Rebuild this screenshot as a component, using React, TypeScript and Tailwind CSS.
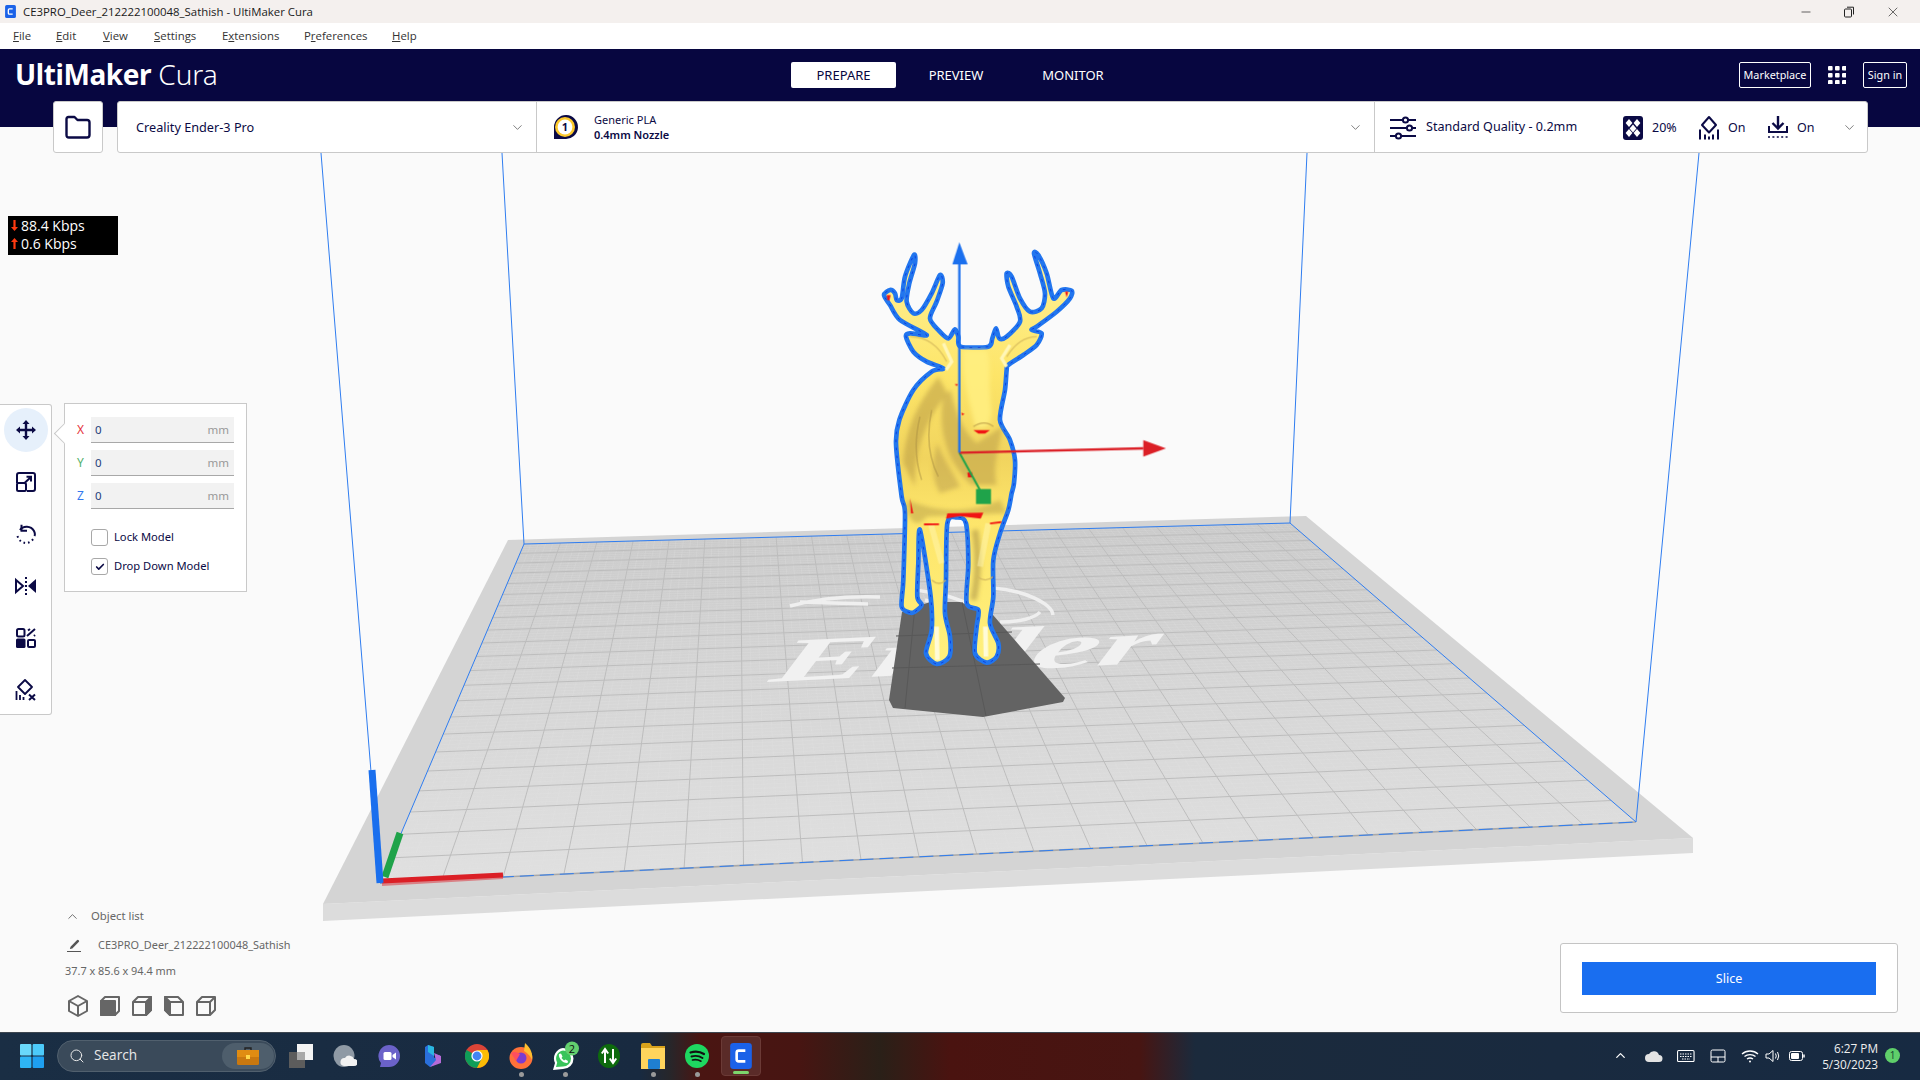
import { Search, ChevronDown, ChevronUp, Minus, X, Check, Pencil } from 'lucide-react';

const NAVY = '#0b0a45';

// projective mapping of the build plate, back-left, back-right, front-right, front-left
const quad = [
  [524, 544],
  [1290, 523],
  [1636, 822],
  [380, 883],
];

function makeProjector() {
  const [[x0, y0], [x1, y1], [x2, y2], [x3, y3]] = quad;
  const dx1 = x1 - x2;
  const dx2 = x3 - x2;
  const sx = x0 - x1 + x2 - x3;
  const dy1 = y1 - y2;
  const dy2 = y3 - y2;
  const sy = y0 - y1 + y2 - y3;
  const den = dx1 * dy2 - dx2 * dy1;
  const g = (sx * dy2 - dx2 * sy) / den;
  const h = (dx1 * sy - sx * dy1) / den;
  const a = x1 - x0 + g * x1;
  const b = x3 - x0 + h * x3;
  const d = y1 - y0 + g * y1;
  const e = y3 - y0 + h * y3;
  return (u: number, v: number) => {
    const w = g * u + h * v + 1;
    return [(a * u + b * v + x0) / w, (d * u + e * v + y0) / w];
  };
}

const project = makeProjector();

function gridLines(count: number) {
  const lines: string[] = [];
  for (let i = 1; i < count; i++) {
    const t = i / count;
    const [ax, ay] = project(t, 0);
    const [bx, by] = project(t, 1);
    const [cx, cy] = project(0, t);
    const [dx, dy] = project(1, t);
    lines.push(`M${ax.toFixed(1)} ${ay.toFixed(1)}L${bx.toFixed(1)} ${by.toFixed(1)}`);
    lines.push(`M${cx.toFixed(1)} ${cy.toFixed(1)}L${dx.toFixed(1)} ${dy.toFixed(1)}`);
  }
  return lines.join('');
}

const deerPoints =
  '150 1148 125 1130 130 1050 135 850 125 800 108 640 118 570 160 480 215 425 250 415 200 395 160 365 138 320 150 310 200 315 120 270 90 225 72 195 90 180 105 190 110 210 125 205 135 140 162 75 165 100 148 160 140 215 160 250 185 240 215 190 240 135 248 160 230 215 210 265 235 300 265 325 285 298 295 320 302 350 385 350 397 325 408 295 418 325 440 320 480 275 470 230 445 170 440 130 455 140 480 205 510 245 545 235 555 190 540 130 522 70 535 75 560 130 580 205 605 180 635 182 630 205 590 245 530 290 515 300 545 310 530 345 490 375 445 405 440 420 435 480 420 570 450 630 465 690 462 760 455 790 445 840 420 910 400 990 400 1100 390 1180 415 1240 410 1280 380 1298 345 1270 350 1190 355 1140 320 1120 325 1000 318 880 290 862 262 880 258 1050 255 1150 270 1220 268 1280 230 1302 198 1270 215 1200 212 1100 180 900 175 1000 172 1100 185 1125 165 1145';

// closed catmull-rom through the traced silhouette points
function smoothPath(raw: string) {
  const n = raw.split(' ').map(Number);
  const pts: number[][] = [];
  for (let i = 0; i < n.length; i += 2) pts.push([n[i], n[i + 1]]);
  const k = 7;
  let d = `M${pts[0][0]} ${pts[0][1]}`;
  for (let i = 0; i < pts.length; i++) {
    const p0 = pts[(i - 1 + pts.length) % pts.length];
    const p1 = pts[i];
    const p2 = pts[(i + 1) % pts.length];
    const p3 = pts[(i + 2) % pts.length];
    const c1x = p1[0] + (p2[0] - p0[0]) / k;
    const c1y = p1[1] + (p2[1] - p0[1]) / k;
    const c2x = p2[0] - (p3[0] - p1[0]) / k;
    const c2y = p2[1] - (p3[1] - p1[1]) / k;
    d += `C${c1x.toFixed(1)} ${c1y.toFixed(1)} ${c2x.toFixed(1)} ${c2y.toFixed(1)} ${p2[0]} ${p2[1]}`;
  }
  return d + 'Z';
}

const deerOutline = smoothPath(deerPoints);

function Deer() {
  return (
    <g transform="translate(860 230) scale(0.3333)">
      <defs>
        <linearGradient id="deerBody" x1="0" y1="0" x2="0" y2="1">
          <stop offset="0" stopColor="#fff19a" />
          <stop offset="0.3" stopColor="#fde568" />
          <stop offset="0.5" stopColor="#f1d45e" />
          <stop offset="0.64" stopColor="#fde56a" />
          <stop offset="1" stopColor="#fff07c" />
        </linearGradient>
        <filter id="soft" x="-20%" y="-20%" width="140%" height="140%">
          <feGaussianBlur stdDeviation="7" />
        </filter>
        <clipPath id="deerClip">
          <path d={deerOutline} />
        </clipPath>
      </defs>
      <path d={deerOutline} fill="url(#deerBody)" stroke="#2276ee" strokeWidth="14" strokeLinejoin="round" />
      <path d={deerOutline} fill="none" stroke="#0d3fe0" strokeWidth="3" strokeLinejoin="round" strokeDasharray="8 16" />
      <g clipPath="url(#deerClip)">
        <g filter="url(#soft)">
          <path d="M235 440 C180 510 135 590 130 700 L165 770 C160 660 205 560 262 490 Z" fill="#bfa24a" opacity="0.6" />
          <path d="M250 500 C230 600 265 700 335 765 L410 765 C395 690 425 640 425 590 L350 640 C305 600 285 540 272 480 Z" fill="#c8ab50" opacity="0.7" />
          <path d="M300 770 C270 710 250 690 232 640 C215 700 215 750 240 790 Z" fill="#b3974a" opacity="0.45" />
          <path d="M312 360 C300 430 335 540 345 590 C380 600 400 590 392 520 C385 460 395 400 380 360 Z" fill="#ffee80" opacity="0.9" />
          <path d="M140 840 C155 890 180 885 200 860 L440 850 L420 810 C330 850 240 850 140 810 Z" fill="#a68c42" opacity="0.4" />
          <path d="M345 900 C360 1000 350 1060 340 1110" stroke="#a68c42" strokeWidth="20" fill="none" opacity="0.55" />
        </g>
        <path d="M180 560 C165 620 165 690 185 750 M215 540 C200 610 205 680 235 740" stroke="#a88f42" strokeWidth="5" fill="none" opacity="0.45" />
        <path d="M212 880 L245 1000 M385 880 L360 1010" stroke="#fff6b0" strokeWidth="18" fill="none" opacity="0.5" />
        <path d="M215 1050 Q238 1070 258 1050 M352 1040 Q375 1060 400 1040" stroke="#d4b95e" strokeWidth="4" fill="none" />
        <path d="M230 1190 L232 1290 M376 1190 L378 1280" stroke="#fffbd8" strokeWidth="14" fill="none" />
        <path d="M250 340 L275 395 L258 420 M450 345 L425 385 L440 410" stroke="#fff6b8" strokeWidth="10" fill="none" />
        <path d="M150 320 C195 320 235 345 260 395 M530 320 C495 320 465 340 440 380" stroke="#dcc160" strokeWidth="4" fill="none" />
        <path d="M340 590 C360 575 385 575 400 590" stroke="#c9ad52" strokeWidth="4" fill="none" />
      </g>
      {/* overhang in red */}
      <g fill="#f01414">
        <path d="M262 850 L370 848 L362 866 L300 858 L258 866 Z" />
        <path d="M192 880 L237 880 L237 885 L192 886 Z" />
        <path d="M390 878 L425 873 L423 879 L390 883 Z" />
        <path d="M150 805 L160 850 L153 850 Z" />
        <path d="M340 600 L390 600 L375 611 L355 611 Z" />
        <path d="M80 195 L92 195 L88 212 L82 210 Z" />
        <path d="M615 185 L625 185 L620 202 Z" />
        <path d="M322 728 L336 726 L338 742 L324 742 Z" />
        <path d="M284 462 L294 462 L290 468 Z" />
        <path d="M304 548 L314 552 L306 556 Z" />
      </g>
      {/* move gizmo */}
      <path d="M298 668 L360 780" stroke="#1fa34a" strokeWidth="6" />
      <rect x="348" y="777" width="45" height="45" fill="#1fa34a" />
      <path d="M298 668 L850 655" stroke="#db1f26" strokeWidth="7" />
      <path d="M850 630 L918 655 L850 680 Z" fill="#db1f26" />
      <path d="M298 668 L298 100" stroke="#1a6fee" strokeWidth="7" />
      <path d="M277 103 L298 37 L323 103 Z" fill="#1a6fee" />
    </g>
  );
}

function Scene() {
  const wire = '#2f7df0';
  return (
    <svg className="absolute top-0 left-0" width="1920" height="905" viewBox="0 127 1920 905">
      <defs>
        <linearGradient id="bedFill" x1="0" y1="0" x2="0" y2="1">
          <stop offset="0" stopColor="#c9c9c9" />
          <stop offset="0.45" stopColor="#d6d6d6" />
          <stop offset="1" stopColor="#e0e0e0" />
        </linearGradient>
      </defs>
      {/* platform */}
      <path d="M323 904 L1693 838 L1693 853 L323 921 Z" fill="#dcdcdc" />
      <path d="M508 540 L1306 516 L1693 838 L323 904 Z" fill="#d4d4d4" />
      <path d={`M${quad[0].join(' ')} L${quad[1].join(' ')} L${quad[2].join(' ')} L${quad[3].join(' ')} Z`} fill="url(#bedFill)" />
      <path d={gridLines(110)} stroke="#e8e8e8" strokeWidth="0.5" fill="none" opacity="0.4" />
      <path d={gridLines(22)} stroke="#bdbdbd" strokeWidth="1" fill="none" />
      {/* ender logo on the plate */}
      <path
        d="M790 606 C820 598 850 596 880 597 M800 602 L868 604 M905 590 C930 590 950 596 965 602 M992 588 C1025 590 1052 604 1053 615 M1000 622 C1020 622 1035 618 1040 612 M925 600 L965 612"
        fill="none"
        stroke="#f0f0f0"
        strokeWidth="3.5"
        opacity="0.95"
      />
      <text
        x="0"
        y="0"
        transform="matrix(1 -0.05 -0.35 1 768 682)"
        fontFamily="'Liberation Serif', serif"
        fontWeight="700"
        fontStyle="italic"
        fontSize="62"
        fill="#f1f1f1"
        textLength="385"
        lengthAdjust="spacingAndGlyphs"
      >
        Ender
      </text>
      {/* shadow under the model */}
      <path d="M902 612 L930 602 L960 602 L993 615 L1065 698 L1063 702 L983 717 L893 708 L889 700 Z" fill="#636363" />
      <path d="M896 636 L1012 632 M892 668 L1040 664 M962 602 L986 716 M915 606 L905 708" stroke="#585858" strokeWidth="1" fill="none" />
      {/* build volume */}
      <path d="M380 883 L1636 822" stroke="#a9a9a9" strokeWidth="1.6" fill="none" />
      <path
        d="M321 153 L380 883 M502 153 L524 544 M1307 153 L1290 523 M1699 153 L1636 822 M380 883 L524 544 L1290 523 L1636 822"
        stroke={wire}
        strokeWidth="1"
        fill="none"
      />
      <path d="M380 883 L1636 822" stroke={wire} strokeWidth="1" strokeDasharray="14 6" fill="none" />
      {/* origin axes */}
      <path d="M382 886 L503 879 L503 875 L382 882 Z" fill="#d98085" />
      <path d="M400 833 L385 877" stroke="#1fa34a" strokeWidth="7" />
      <path d="M382 881 L503 875" stroke="#db1f26" strokeWidth="5" />
      <path d="M372 770 L380 883" stroke="#1a6fee" strokeWidth="7" />
      <Deer />
    </svg>
  );
}

function Underlined({ text, at }: { text: string; at: number }) {
  return (
    <span>
      {text.slice(0, at)}
      <span className="underline">{text[at]}</span>
      {text.slice(at + 1)}
    </span>
  );
}

function TitleBar() {
  return (
    <div className="flex h-[23px] items-center bg-[#f4f0ee] pl-[4px] text-[11.4px] text-[#1a1a1a] font-['Open_Sans',sans-serif]">
      <CuraIcon size={13} />
      <span className="ml-[6px]">CE3PRO_Deer_212222100048_Sathish - UltiMaker Cura</span>
      <div className="ml-auto flex items-center gap-[30px] pr-[19px] text-[#222]">
        <Minus size={14} strokeWidth={1.2} />
        <svg width="12" height="12" viewBox="0 0 12 12" fill="none" stroke="currentColor" strokeWidth="1">
          <rect x="1.5" y="3" width="7" height="8" rx="1" />
          <path d="M4 1.2 H10.5 V8.5" />
        </svg>
        <X size={16} strokeWidth={1} />
      </div>
    </div>
  );
}

function MenuBar() {
  return (
    <div className="flex h-[26px] items-center bg-white pl-[13px] text-[11.4px] text-[#333] font-['Open_Sans',sans-serif]">
      <span className="w-[43px]"><Underlined text="File" at={0} /></span>
      <span className="w-[47px]"><Underlined text="Edit" at={0} /></span>
      <span className="w-[51px]"><Underlined text="View" at={0} /></span>
      <span className="w-[68px]"><Underlined text="Settings" at={0} /></span>
      <span className="w-[82px]"><Underlined text="Extensions" at={1} /></span>
      <span className="w-[88px]"><Underlined text="Preferences" at={1} /></span>
      <span><Underlined text="Help" at={0} /></span>
    </div>
  );
}

function AppHeader() {
  return (
    <header className="flex h-[78px] items-start bg-[#070640] text-white">
      <div className="mt-[6px] ml-[15px] w-[776px] text-[28px] leading-[38px]">
        <span className="font-bold tracking-[-0.4px]">UltiMaker</span>
        <span className="ml-[7px] font-light">Cura</span>
      </div>
      <nav className="mt-[13px] flex items-center text-[13px]">
        <div className="flex h-[26px] w-[105px] items-center justify-center rounded-[2px] bg-white pt-[1px] text-[#070640]">PREPARE</div>
        <div className="w-[120px] pt-[1px] text-center">PREVIEW</div>
        <div className="ml-[-3px] w-[120px] pt-[1px] text-center">MONITOR</div>
      </nav>
      <div className="mt-[13px] ml-auto flex items-center pr-[13px] text-[10.8px]">
        <div className="flex h-[26px] w-[72px] items-center justify-center rounded-[2px] border border-white">Marketplace</div>
        <svg className="mx-[17px]" width="18" height="18" viewBox="0 0 18 18" fill="white">
          {[0, 7, 14].map((y) => [0, 7, 14].map((x) => <rect key={`${x}-${y}`} x={x} y={y} width="4.6" height="4.6" rx="1" />))}
        </svg>
        <div className="flex h-[26px] w-[44px] items-center justify-center rounded-[2px] border border-white">Sign in</div>
      </div>
    </header>
  );
}

function ExtruderIcon() {
  return (
    <svg width="28" height="28" viewBox="0 0 28 28">
      <path d="M3 26 V14 A12 12 0 1 1 14 26 Z" fill={NAVY} />
      <circle cx="14" cy="14" r="10" fill="#fcc92d" />
      <circle cx="14" cy="14" r="7.4" fill="white" />
      <text x="14" y="18" textAnchor="middle" fontSize="11" fontWeight="700" fill={NAVY} fontFamily="'Noto Sans', sans-serif">1</text>
    </svg>
  );
}

function QualityIcon() {
  return (
    <svg width="26" height="26" viewBox="0 0 26 26" fill="none" stroke={NAVY} strokeWidth="2">
      <path d="M0 5 H13 M18 5 H26 M0 13 H17 M22 13 H26 M0 21 H6 M11 21 H26" />
      <circle cx="15.5" cy="5" r="2.6" />
      <circle cx="19.5" cy="13" r="2.6" />
      <circle cx="8.5" cy="21" r="2.6" />
    </svg>
  );
}

function InfillIcon() {
  return (
    <svg width="20" height="24" viewBox="0 0 20 24">
      <rect width="20" height="24" rx="3" fill={NAVY} />
      <g fill="white">
        <path d="M6 3 L9.4 7 L6 11 L2.6 7 Z" />
        <path d="M14 3 L17.4 7 L14 11 L10.6 7 Z" />
        <path d="M10 8.5 L13.4 12.5 L10 16.5 L6.6 12.5 Z" />
        <path d="M6 13 L9.4 17 L6 21 L2.6 17 Z" />
        <path d="M14 13 L17.4 17 L14 21 L10.6 17 Z" />
      </g>
    </svg>
  );
}

function SupportIcon() {
  return (
    <svg width="22" height="25" viewBox="0 0 22 24" fill="none" stroke={NAVY} strokeWidth="2">
      <path d="M11 1.5 L18 9.5 L11 17 L4 9.5 Z" strokeLinejoin="round" />
      <path d="M2 14 V24 M7 19 V24 M11 21 V24 M15 19 V24 M20 14 V24" />
    </svg>
  );
}

function AdhesionIcon() {
  return (
    <svg width="22" height="24" viewBox="0 0 22 24" fill="none" stroke={NAVY} strokeWidth="2.4">
      <path d="M11 0 V11" />
      <path d="M5.5 7 L11 12.5 L16.5 7" />
      <path d="M2 10 V16 H20 V10" strokeWidth="2" />
      <path d="M1 21 H21" strokeWidth="1.6" strokeDasharray="2 2.4" />
    </svg>
  );
}

function Chevron() {
  return <ChevronDown size={15} strokeWidth={1} className="text-[#333]" />;
}

function PrinterBar() {
  return (
    <div className="relative z-10 -mt-[26px] ml-[53px] flex h-[52px] gap-[14px] text-[#0b0a45]">
      <div className="flex w-[50px] items-center justify-center rounded-[3px] border border-[#c9c9c9] bg-white">
        <svg width="26" height="24" viewBox="0 0 26 24" fill="none" stroke={NAVY} strokeWidth="2.4" strokeLinejoin="round">
          <path d="M1.5 4 Q1.5 2 3.5 2 H9.5 L12.5 5 H22 Q24.5 5 24.5 7.5 V20 Q24.5 22.5 22 22.5 H4 Q1.5 22.5 1.5 20 Z" />
        </svg>
      </div>
      <div className="flex w-[1751px] rounded-[3px] border border-[#c9c9c9] bg-white">
        <div className="flex w-[419px] items-center justify-between border-r border-[#c9c9c9] pt-[1px] pr-[11px] pl-[18px] text-[12.7px]">
          <span>Creality Ender-3 Pro</span>
          <Chevron />
        </div>
        <div className="flex w-[838px] items-center border-r border-[#c9c9c9] pr-[11px] pl-[14px]">
          <ExtruderIcon />
          <div className="ml-[15px] text-[11px] leading-[15px]">
            <div>Generic PLA</div>
            <div className="font-semibold">0.4mm Nozzle</div>
          </div>
          <span className="ml-auto"><Chevron /></span>
        </div>
        <div className="flex flex-1 items-center pt-[1px] pl-[15px] text-[12.6px]">
          <QualityIcon />
          <span className="ml-[10px] w-[197px]">Standard Quality - 0.2mm</span>
          <InfillIcon />
          <span className="mt-[2px] ml-[9px] w-[46px] text-[12.5px]">20%</span>
          <SupportIcon />
          <span className="mt-[2px] ml-[8px] w-[39px] text-[12.5px]">On</span>
          <AdhesionIcon />
          <span className="mt-[2px] ml-[8px] w-[45px] text-[12.5px]">On</span>
          <Chevron />
        </div>
      </div>
    </div>
  );
}

function SpeedArrow({ up }: { up?: boolean }) {
  return (
    <svg className={up ? 'rotate-180' : ''} width="7" height="11" viewBox="0 0 7 11" fill="#ff3a10">
      <path d="M2.4 0 H4.6 V7 H7 L3.5 11 L0 7 H2.4 Z" />
    </svg>
  );
}

function NetSpeed() {
  return (
    <div className="relative mt-[63px] ml-[8px] flex h-[39px] w-[110px] flex-col justify-center bg-black pb-[2px] pl-[3px] text-[14px] leading-[18px] text-white font-['Open_Sans',sans-serif]">
      <div className="flex items-center gap-[3px]"><SpeedArrow /><span>88.4 Kbps</span></div>
      <div className="flex items-center gap-[3px]"><SpeedArrow up /><span>0.6 Kbps</span></div>
    </div>
  );
}

function MoveIcon() {
  return (
    <svg width="20" height="20" viewBox="0 0 20 20" fill={NAVY}>
      <path d="M8.8 3.5 H11.2 V8.8 H16.5 V11.2 H11.2 V16.5 H8.8 V11.2 H3.5 V8.8 H8.8 Z" />
      <path d="M10 0 L13.5 4 H6.5 Z M10 20 L6.5 16 H13.5 Z M0 10 L4 6.5 V13.5 Z M20 10 L16 13.5 V6.5 Z" />
    </svg>
  );
}

function ScaleIcon() {
  return (
    <svg width="20" height="20" viewBox="0 0 20 20" fill="none" stroke={NAVY} strokeWidth="2">
      <path d="M8 1 H17 Q19 1 19 3 V17 Q19 19 17 19 H11 M1 11 V3 Q1 1 3 1 H8" />
      <rect x="1" y="11" width="9" height="8" rx="1.5" />
      <path d="M8 11.5 L15 5 M10.5 4.8 H15 V9.4" />
    </svg>
  );
}

function RotateIcon() {
  return (
    <svg width="20" height="20" viewBox="0 0 20 20" fill="none" stroke={NAVY} strokeWidth="2">
      <path d="M4 6 C7 1.5 15 1.5 18 7 C19 9 19 11 18.4 12" />
      <path d="M5.5 0.8 V6.8 H11" strokeWidth="2" />
      <path d="M1.5 12 C3 17 7 19 10 19 C13 19 16 17 18 14" strokeDasharray="1.6 3" />
    </svg>
  );
}

function MirrorIcon() {
  return (
    <svg width="22" height="20" viewBox="0 0 22 20">
      <path d="M1 4 L8 10 L1 16 Z" fill="none" stroke={NAVY} strokeWidth="2" />
      <path d="M21 3 V17 L13 10 Z" fill={NAVY} />
      <path d="M11 1 V19" stroke={NAVY} strokeWidth="2" strokeDasharray="2 2" />
    </svg>
  );
}

function ArrangeIcon() {
  return (
    <svg width="20" height="20" viewBox="0 0 20 20" fill="none" stroke={NAVY} strokeWidth="2">
      <rect x="1" y="1" width="7.5" height="7.5" rx="1.5" />
      <path d="M11 8 L19 1 M12 2.5 L14 1 M18 8 L19 7" />
      <rect x="0" y="10.5" width="9.5" height="9.5" rx="1.5" fill={NAVY} stroke="none" />
      <rect x="12" y="12" width="7" height="7" rx="1" />
    </svg>
  );
}

function PerModelIcon() {
  return (
    <svg width="22" height="22" viewBox="0 0 22 22" fill="none" stroke={NAVY} strokeWidth="1.8">
      <path d="M10 1 L17 8 L10 15 L3 8 Z" strokeLinejoin="round" />
      <path d="M1.5 12 V21 M5 16 V21 M8.5 18 V21" />
      <path d="M14 15.5 L20 21 M20 15.5 L14 21" strokeWidth="2" />
    </svg>
  );
}

function ToolButton({ active, children }: { active?: boolean; children: React.ReactNode }) {
  return (
    <div className={active ? 'flex h-[44px] w-[44px] items-center justify-center rounded-full bg-[#e6f0fb]' : 'flex h-[44px] w-[44px] items-center justify-center'}>
      {children}
    </div>
  );
}

function AxisInput({ axis, color }: { axis: string; color: string }) {
  return (
    <div className="flex h-[26px] items-center">
      <span className={`w-[26px] pl-[12px] text-[12px] ${color}`}>{axis}</span>
      <div className="flex h-[26px] w-[143px] items-center justify-between border-b border-[#a8a8a8] bg-[#f2f2f2] pr-[5px] pl-[4px] text-[11.5px]">
        <span className="text-[#1f3f7a]">0</span>
        <span className="text-[#999]">mm</span>
      </div>
    </div>
  );
}

function CheckRow({ label, checked }: { label: string; checked?: boolean }) {
  return (
    <div className="flex h-[17px] items-center pl-[26px] text-[11.2px] text-[#0b0a45]">
      <div className="flex h-[17px] w-[17px] items-center justify-center rounded-[3px] border border-[#a8a8a8] bg-white">
        {checked && <Check size={10} strokeWidth={4} className="text-[#0b0a45]" />}
      </div>
      <span className="ml-[6px]">{label}</span>
    </div>
  );
}

function Tools() {
  return (
    <div className="relative mt-[148px] flex items-start">
      <div className="mt-[1px] flex h-[311px] w-[52px] flex-col items-center gap-[8px] rounded-r-[3px] border border-l-0 border-[#c9c9c9] bg-white pt-[3px]">
        <ToolButton active><MoveIcon /></ToolButton>
        <ToolButton><ScaleIcon /></ToolButton>
        <ToolButton><RotateIcon /></ToolButton>
        <ToolButton><MirrorIcon /></ToolButton>
        <ToolButton><ArrangeIcon /></ToolButton>
        <ToolButton><PerModelIcon /></ToolButton>
      </div>
      <div className="relative ml-[12px] flex h-[189px] w-[183px] flex-col border border-[#c9c9c9] bg-white pt-[13px]">
        <div className="absolute top-[22px] left-[-8px] h-[15px] w-[15px] rotate-45 border-b border-l border-[#c9c9c9] bg-white" />
        <div className="flex flex-col gap-[7px]">
          <AxisInput axis="X" color="text-[#e5343c]" />
          <AxisInput axis="Y" color="text-[#4fb06a]" />
          <AxisInput axis="Z" color="text-[#3378ee]" />
        </div>
        <div className="mt-[20px] flex flex-col gap-[12px]">
          <CheckRow label="Lock Model" />
          <CheckRow label="Drop Down Model" checked />
        </div>
      </div>
    </div>
  );
}

function ViewCube({ face }: { face: number }) {
  const stroke = '#666';
  return (
    <svg width="22" height="22" viewBox="0 0 22 22" fill="none" stroke={stroke} strokeWidth="2" strokeLinejoin="round">
      {face === 0 && (
        <>
          <path d="M11 1 L20 6 V16 L11 21 L2 16 V6 Z" />
          <path d="M2 6 L11 11 L20 6 M11 11 V21" />
        </>
      )}
      {face === 1 && (
        <>
          <path d="M2 6 L6 2 H20 V16 L16 20 H2 Z" />
          <path d="M2 6 H16 V20 H2 Z" fill={stroke} />
        </>
      )}
      {face === 2 && (
        <>
          <path d="M2 7 L7 2 H20 V15 L15 20 H2 Z" />
          <path d="M15 7 L20 2 V15 L15 20 Z" fill={stroke} />
          <path d="M2 7 H15 V20" />
        </>
      )}
      {face === 3 && (
        <>
          <path d="M2 2 H15 L20 7 V20 H7 L2 15 Z" />
          <path d="M2 2 L7 7 V20 L2 15 Z" fill={stroke} />
          <path d="M7 7 H20" />
        </>
      )}
      {face === 4 && (
        <>
          <path d="M2 7 L7 2 H20 V15 L15 20 H2 Z" />
          <path d="M2 7 H15 V20 M15 7 L20 2" />
        </>
      )}
    </svg>
  );
}

function ObjectList() {
  return (
    <div className="relative mt-auto mb-[15px] ml-[65px] text-[10.9px] text-[#666]">
      <div className="flex h-[18px] items-center text-[11.3px]">
        <ChevronUp size={15} strokeWidth={1.2} className="text-[#444]" />
        <span className="ml-[11px]">Object list</span>
      </div>
      <div className="mt-[11px] flex h-[18px] items-center pl-[2px]">
        <div className="flex h-[14px] w-[14px] flex-col items-center justify-end">
          <Pencil size={11} strokeWidth={0} fill="#555" />
          <div className="mt-[1px] h-[1.5px] w-[14px] bg-[#555]" />
        </div>
        <span className="ml-[17px]">CE3PRO_Deer_212222100048_Sathish</span>
      </div>
      <div className="mt-[8px] h-[18px] leading-[18px]">37.7 x 85.6 x 94.4 mm</div>
      <div className="mt-[15px] flex h-[22px] gap-[10px] pl-[2px]">
        {[0, 1, 2, 3, 4].map((f) => <ViewCube key={f} face={f} />)}
      </div>
    </div>
  );
}

function SlicePanel() {
  return (
    <div className="absolute right-[22px] bottom-[19px] flex h-[70px] w-[338px] items-center justify-center rounded-[3px] border border-[#c4c4c4] bg-white">
      <div className="flex h-[33px] w-[294px] items-center justify-center bg-[#196ef0] pt-[2px] text-[12.5px] text-white">Slice</div>
    </div>
  );
}

function CuraIcon({ size }: { size: number }) {
  return (
    <svg width={size} height={size} viewBox="0 0 24 24">
      <rect x="2" y="0" width="20" height="24" rx="3" fill="#1b62e8" />
      <path d="M16 7 H10 Q8 7 8 9 V15 Q8 17 10 17 H16" fill="none" stroke="white" strokeWidth="2.4" />
    </svg>
  );
}

function TaskIcon({ children, dot }: { children: React.ReactNode; dot?: boolean }) {
  return (
    <div className="relative flex h-[40px] w-[44px] items-center justify-center">
      {children}
      {dot && <div className="absolute bottom-[-1px] h-[5px] w-[5px] rounded-full bg-[#9a9a9a]" />}
    </div>
  );
}

function Taskbar() {
  return (
    <footer className="flex h-[48px] items-center border-t border-[#3d4650] bg-[linear-gradient(90deg,#1a2e44_0px,#182a40_640px,#27262a_670px,#4a1512_700px,#471512_800px,#2a2018_880px,#4a1310_950px,#471512_1140px,#1b2a3c_1195px,#172a42_1920px)] pb-[2px] pl-[20px] text-white font-['Open_Sans',sans-serif]">
      <svg width="24" height="24" viewBox="0 0 24 24">
        <g fill="#45c4f7">
          <rect width="11.4" height="11.4" rx="1" fill="#6ad9fb" />
          <rect x="12.6" width="11.4" height="11.4" rx="1" fill="#4ccafa" />
          <rect y="12.6" width="11.4" height="11.4" rx="1" fill="#2eb5f5" />
          <rect x="12.6" y="12.6" width="11.4" height="11.4" rx="1" fill="#1e9ff0" />
        </g>
      </svg>
      <div className="ml-[13px] flex h-[32px] w-[219px] items-center rounded-full border border-[#51606e] bg-[#3a4a5a] pl-[11px]">
        <Search size={16} strokeWidth={1.5} className="text-[#e8e8e8]" />
        <span className="ml-[9px] text-[13.6px] text-[#e8e8e8]">Search</span>
        <div className="mr-[1px] ml-auto flex h-[26px] w-[52px] items-center justify-center rounded-full bg-[#4e5e6c]">
          <svg width="22" height="18" viewBox="0 0 22 18">
            <path d="M8 3 V1 H14 V3" fill="none" stroke="#222" strokeWidth="1.4" />
            <rect y="3" width="22" height="15" rx="1.5" fill="#c9780f" />
            <rect y="3" width="22" height="7" fill="#e08c12" />
            <rect x="9" y="8" width="4" height="4" fill="#ffd64a" />
          </svg>
        </div>
      </div>
      <div className="ml-[3px] flex items-center">
        <TaskIcon>
          <svg width="24" height="24" viewBox="0 0 24 24">
            <rect x="0" y="8" width="16" height="16" fill="#5c5c5c" />
            <rect x="8" y="0" width="16" height="16" fill="#f4f4f4" />
            <rect x="8" y="8" width="8" height="8" fill="#a9a9a9" />
          </svg>
        </TaskIcon>
        <TaskIcon>
          <svg width="24" height="24" viewBox="0 0 24 24">
            <ellipse cx="11" cy="12" rx="10.5" ry="11" fill="#8f9aa5" />
            <path d="M11 22 a4 4 0 0 1 1-8 a5 5 0 0 1 9 1 a3.5 3.5 0 0 1 0 7 Z" fill="#f2f2f2" />
          </svg>
        </TaskIcon>
        <TaskIcon>
          <svg width="24" height="24" viewBox="0 0 24 24">
            <path d="M12 1 A11 11 0 0 1 12 23 H3 L4 19 A11 11 0 0 1 12 1 Z" fill="#6b62c9" />
            <rect x="6.5" y="8" width="8" height="8" rx="1.5" fill="white" />
            <path d="M15.5 11 L19 8.5 V15.5 L15.5 13 Z" fill="white" />
          </svg>
        </TaskIcon>
        <TaskIcon>
          <svg width="24" height="24" viewBox="0 0 24 24">
            <path d="M7 1 L13 3 V14 L19 11 L19 18 L9 23 L4 19 V3 Z" fill="#2a6fdb" />
            <path d="M13 9 L20 12 V19 L9 23 L15 16 Z" fill="#b56ad8" />
            <path d="M7 1 L13 3 V12 L7 8 Z" fill="#2ab7e0" />
          </svg>
        </TaskIcon>
        <TaskIcon>
          <svg width="24" height="24" viewBox="0 0 24 24">
            <circle cx="12" cy="12" r="12" fill="#db4437" />
            <path d="M12 12 L1.6 6 A12 12 0 0 0 12 24 L17.5 13 Z" fill="#0f9d58" />
            <path d="M12 6 H22.4 A12 12 0 0 1 12 24 L17.5 13 Z" fill="#fbbc05" />
            <circle cx="12" cy="12" r="5.6" fill="white" />
            <circle cx="12" cy="12" r="4.4" fill="#4285f4" />
          </svg>
        </TaskIcon>
        <TaskIcon dot>
          <svg width="24" height="26" viewBox="0 0 24 26">
            <ellipse cx="12" cy="15" rx="11.5" ry="11" fill="#ff7139" />
            <path d="M16 0 C22 5 24 11 23 17 C21 12 18 10 15 8 Z" fill="#ffbd2e" />
            <circle cx="12" cy="15" r="5.5" fill="#7b3bd0" />
            <path d="M2 10 C5 8 8 9 11 11 L7 18 Z" fill="#ff4f5e" />
          </svg>
        </TaskIcon>
        <TaskIcon dot>
          <svg width="28" height="30" viewBox="0 0 28 30">
            <path d="M12 7 A10.5 10.5 0 0 1 12 28 L2 29 L4 22 A10.5 10.5 0 0 1 12 7 Z" fill="white" />
            <path d="M12 9.5 A8 8 0 0 1 12 25.5 L5 26 L6.2 21.5 A8 8 0 0 1 12 9.5 Z" fill="#38c45a" />
            <path d="M8 13 L10 12.5 L11.5 15.5 L10.5 17 L13 19.5 L14.5 18.5 L17 20 L16.5 22 C12 22.5 7 17 8 13 Z" fill="white" />
            <circle cx="21" cy="7.5" r="7" fill="#63cf6e" />
            <text x="21" y="11.5" textAnchor="middle" fontSize="11" fill="#111" fontFamily="'Open Sans', sans-serif">2</text>
          </svg>
        </TaskIcon>
        <TaskIcon>
          <svg width="22" height="24" viewBox="0 0 22 24">
            <ellipse cx="11" cy="12" rx="11" ry="12" fill="#0d6a0d" />
            <path d="M7 19 V6 M3.8 9.5 L7 5 L10.2 9.5" stroke="white" strokeWidth="2" fill="none" />
            <path d="M15 5 V18 M11.8 14.5 L15 19 L18.2 14.5" stroke="white" strokeWidth="2" fill="none" />
          </svg>
        </TaskIcon>
        <TaskIcon dot>
          <svg width="24" height="26" viewBox="0 0 24 26">
            <path d="M0 2 Q0 0 2 0 H9 L11 3 H24 V26 H0 Z" fill="#d9a21b" />
            <rect y="5" width="24" height="21" fill="#ffd45c" />
            <rect x="7" y="16" width="12" height="10" rx="1" fill="#1f7fd1" />
          </svg>
        </TaskIcon>
        <TaskIcon dot>
          <svg width="24" height="24" viewBox="0 0 24 24" fill="none" stroke="#111" strokeLinecap="round">
            <circle cx="12" cy="12" r="12" fill="#1ed760" stroke="none" />
            <path d="M5.5 8.5 C10 7 15 7.5 19 10" strokeWidth="2.2" />
            <path d="M6.5 12.5 C10 11.4 14.5 12 17.5 14" strokeWidth="1.9" />
            <path d="M7.5 16 C10.5 15.2 13.5 15.7 16 17.2" strokeWidth="1.6" />
          </svg>
        </TaskIcon>
        <div className="relative ml-[2px] flex h-[40px] w-[40px] items-center justify-center rounded-[4px] border border-[#6b3a36] bg-[#5a2b28]">
          <CuraIcon size={26} />
          <div className="absolute bottom-[1px] h-[3px] w-[16px] rounded-full bg-[#7dd66c]" />
        </div>
      </div>
      <div className="ml-auto flex items-center">
        <ChevronUp size={15} strokeWidth={2} className="mr-[17px]" />
        <svg className="mr-[14px]" width="18" height="12" viewBox="0 0 18 12">
          <path d="M4 12 a4 4 0 0 1 0-8 a5.5 5.5 0 0 1 10 1 a3.5 3.5 0 0 1 0 7 Z" fill="#e3e3e3" />
        </svg>
        <svg className="mr-[14px]" width="18" height="12" viewBox="0 0 18 12" fill="none" stroke="white" strokeWidth="1">
          <rect x="0.5" y="0.5" width="15" height="10" rx="1" transform="scale(1.1)" />
          <path d="M3 4 H15 M3 6.5 H15 M5 9 H13" strokeDasharray="1.5 1" />
        </svg>
        <svg className="mr-[10px]" width="18" height="14" viewBox="0 0 16 14" fill="none" stroke="white" strokeWidth="1">
          <rect x="1" y="1" width="14" height="12" rx="1.5" />
          <path d="M1 8 H15 M8 8 V13" />
        </svg>
        <svg className="ml-[4px]" width="18" height="14" viewBox="0 0 18 14" fill="none" stroke="white" strokeWidth="1.3">
          <path d="M1 5 C5.5 1 12.5 1 17 5 M3.5 7.6 C6.5 5 11.5 5 14.5 7.6 M6 10 C7.8 8.8 10.2 8.8 12 10" />
          <circle cx="9" cy="12.4" r="1" fill="white" stroke="none" />
        </svg>
        <svg className="ml-[6px]" width="16" height="14" viewBox="0 0 16 14" fill="none" stroke="white" strokeWidth="1">
          <path d="M1 5 H4 L8 1.5 V12.5 L4 9 H1 Z" />
          <path d="M10.5 4.5 Q12 7 10.5 9.5 M12.5 3 Q15 7 12.5 11" />
        </svg>
        <svg className="ml-[8px]" width="16" height="10" viewBox="0 0 16 10" fill="none" stroke="white" strokeWidth="1">
          <rect x="0.5" y="0.5" width="13" height="9" rx="2" />
          <rect x="2" y="2" width="8" height="6" rx="1" fill="white" stroke="none" />
          <path d="M15 3.5 V6.5" strokeWidth="1.5" />
        </svg>
        <div className="ml-[17px] flex flex-col items-end text-[11.8px] leading-[16px] text-[#f0f0f0]">
          <span>6:27 PM</span>
          <span>5/30/2023</span>
        </div>
        <div className="mr-[20px] ml-[7px] flex h-[15px] w-[15px] items-center justify-center rounded-full bg-[#5fcf6a] text-[10px] text-[#143]">1</div>
      </div>
    </footer>
  );
}

export default function App() {
  return (
    <div className="flex h-[1080px] w-[1920px] flex-col overflow-hidden bg-[#fafafa] font-['Noto_Sans',sans-serif]">
      <TitleBar />
      <MenuBar />
      <AppHeader />
      <main className="relative flex min-h-0 flex-1 flex-col">
        <Scene />
        <PrinterBar />
        <NetSpeed />
        <Tools />
        <ObjectList />
        <SlicePanel />
      </main>
      <Taskbar />
    </div>
  );
}
